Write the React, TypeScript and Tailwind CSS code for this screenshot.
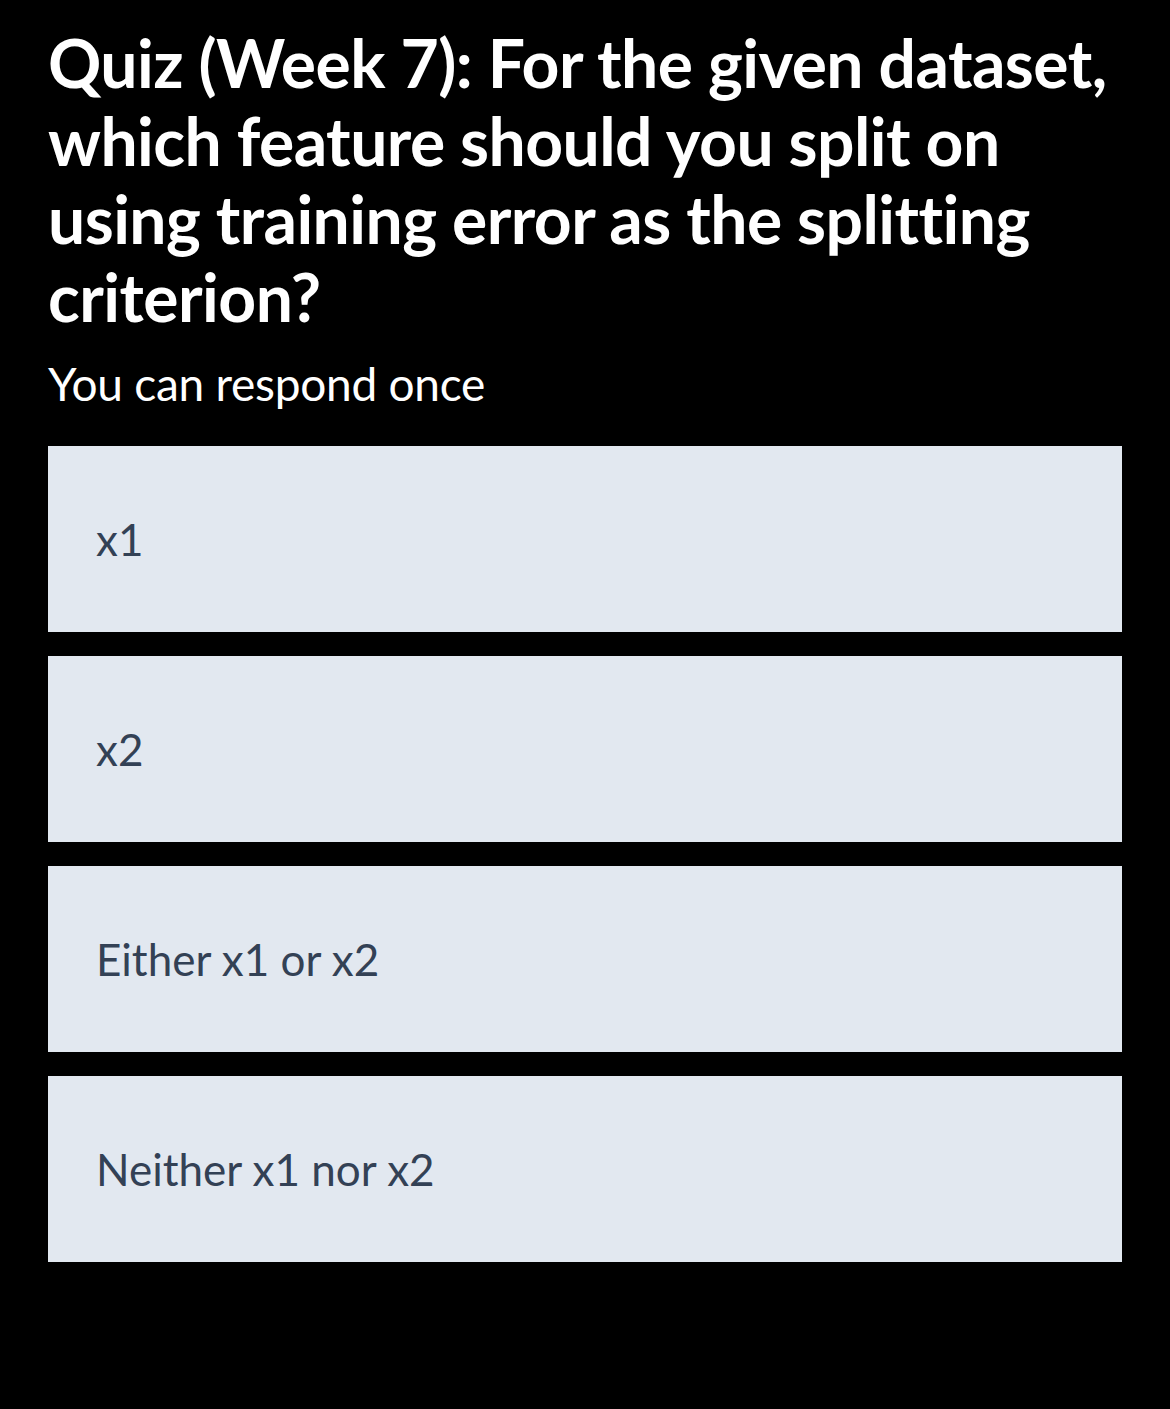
const options = ['x1', 'x2', 'Either x1 or x2', 'Neither x1 nor x2']

export default function App() {
  return (
    <div
      className="min-h-[1409px] w-full bg-black px-12 pt-[24px] [font-variant-ligatures:none]"
      style={{ fontFamily: 'Lato, "Noto Sans", sans-serif' }}
    >
      <h1 className="text-[66px] font-bold leading-[78px] tracking-[-0.55px] text-white whitespace-nowrap">
        Quiz (Week 7): For the given dataset,
        <br />
        which feature should you split on
        <br />
        using training error as the splitting
        <br />
        criterion?
      </h1>
      <p className="mt-5 text-[46px] leading-[56px] tracking-[-0.25px] text-white">You can respond once</p>
      <div className="mt-[34px] flex flex-col gap-6">
        {options.map((opt) => (
          <button
            key={opt}
            className="flex h-[186px] w-full items-center bg-[#e2e8f0] px-12 text-left text-[44px] text-[#334155]"
          >
            {opt}
          </button>
        ))}
      </div>
    </div>
  )
}
